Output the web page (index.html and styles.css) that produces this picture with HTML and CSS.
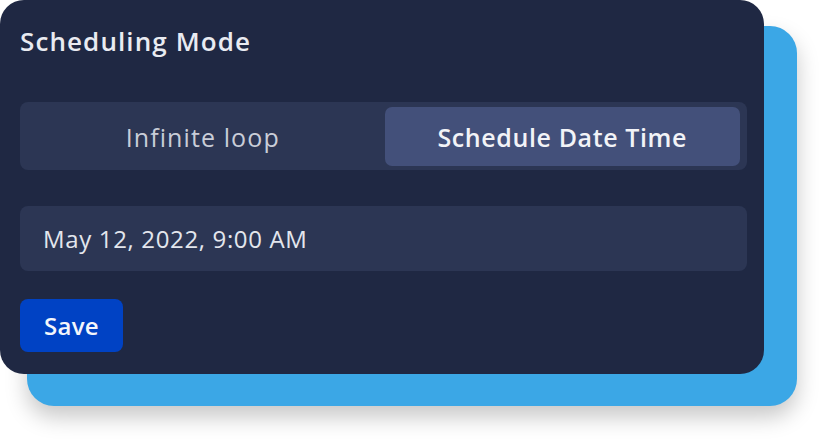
FILE: index.html
```html
<!DOCTYPE html>
<html lang="en">
<head>
<meta charset="utf-8">
<title>Scheduling Mode</title>
<link rel="stylesheet" href="styles.css">
</head>
<body>
  <section class="panel">
    <h2 class="panel-title">Scheduling Mode</h2>
    <div class="segmented" role="tablist">
      <button class="segment" role="tab">Infinite loop</button>
      <button class="segment is-active" role="tab" aria-selected="true">Schedule Date Time</button>
    </div>
    <div class="field">May 12, 2022, 9:00 AM</div>
    <div class="actions">
      <button class="btn-primary">Save</button>
    </div>
  </section>
</body>
</html>
```
FILE: styles.css
```css
* {
  box-sizing: border-box;
}

html,
body {
  margin: 0;
  background: #ffffff;
}

body {
  font-family: "Open Sans", "Noto Sans", sans-serif;
  width: 830px;
  height: 440px;
  overflow: hidden;
}

/* Dark card with the blue backing card and its soft drop shadow */
.panel {
  width: 764px;
  height: 374px;
  background: #1f2843;
  border-radius: 24px;
  padding: 0 17px 0 20px;
  display: flex;
  flex-direction: column;
  box-shadow:
    30px 29px 0 3px #3ba7e6,
    30px 40px 22px 3px rgba(0, 0, 0, 0.22);
}

.panel-title {
  margin: 0;
  height: 84px;
  padding-top: 24px;
  font-size: 26px;
  font-weight: 600;
  letter-spacing: 1.1px;
  line-height: 34px;
  color: #e9ebf1;
}

.segmented {
  margin-top: 18px;
  height: 68px;
  background: #2c3654;
  border-radius: 8px;
  padding: 5px 7px 4px 5px;
  display: grid;
  grid-template-columns: 1fr 1fr;
  gap: 4px;
}

.segment {
  border: 0;
  border-radius: 7px;
  background: transparent;
  font-family: inherit;
  font-size: 25px;
  font-weight: 400;
  letter-spacing: 1.1px;
  color: #c9cdd8;
  padding: 0;
}

.segment.is-active {
  background: #43507a;
  font-weight: 600;
  letter-spacing: 0.6px;
  color: #f2f3f7;
}

.field {
  margin-top: 36px;
  height: 65px;
  background: #2c3654;
  border-radius: 8px;
  padding: 0 23px;
  display: flex;
  align-items: center;
  font-size: 24px;
  letter-spacing: 0.65px;
  color: #e3e6ed;
}

.actions {
  margin-top: 28px;
  display: flex;
}

.btn-primary {
  width: 103px;
  height: 53px;
  border: 0;
  border-radius: 8px;
  background: #0042c4;
  color: #f4f6fb;
  font-family: inherit;
  font-size: 24px;
  font-weight: 600;
  letter-spacing: 0.3px;
}
```
